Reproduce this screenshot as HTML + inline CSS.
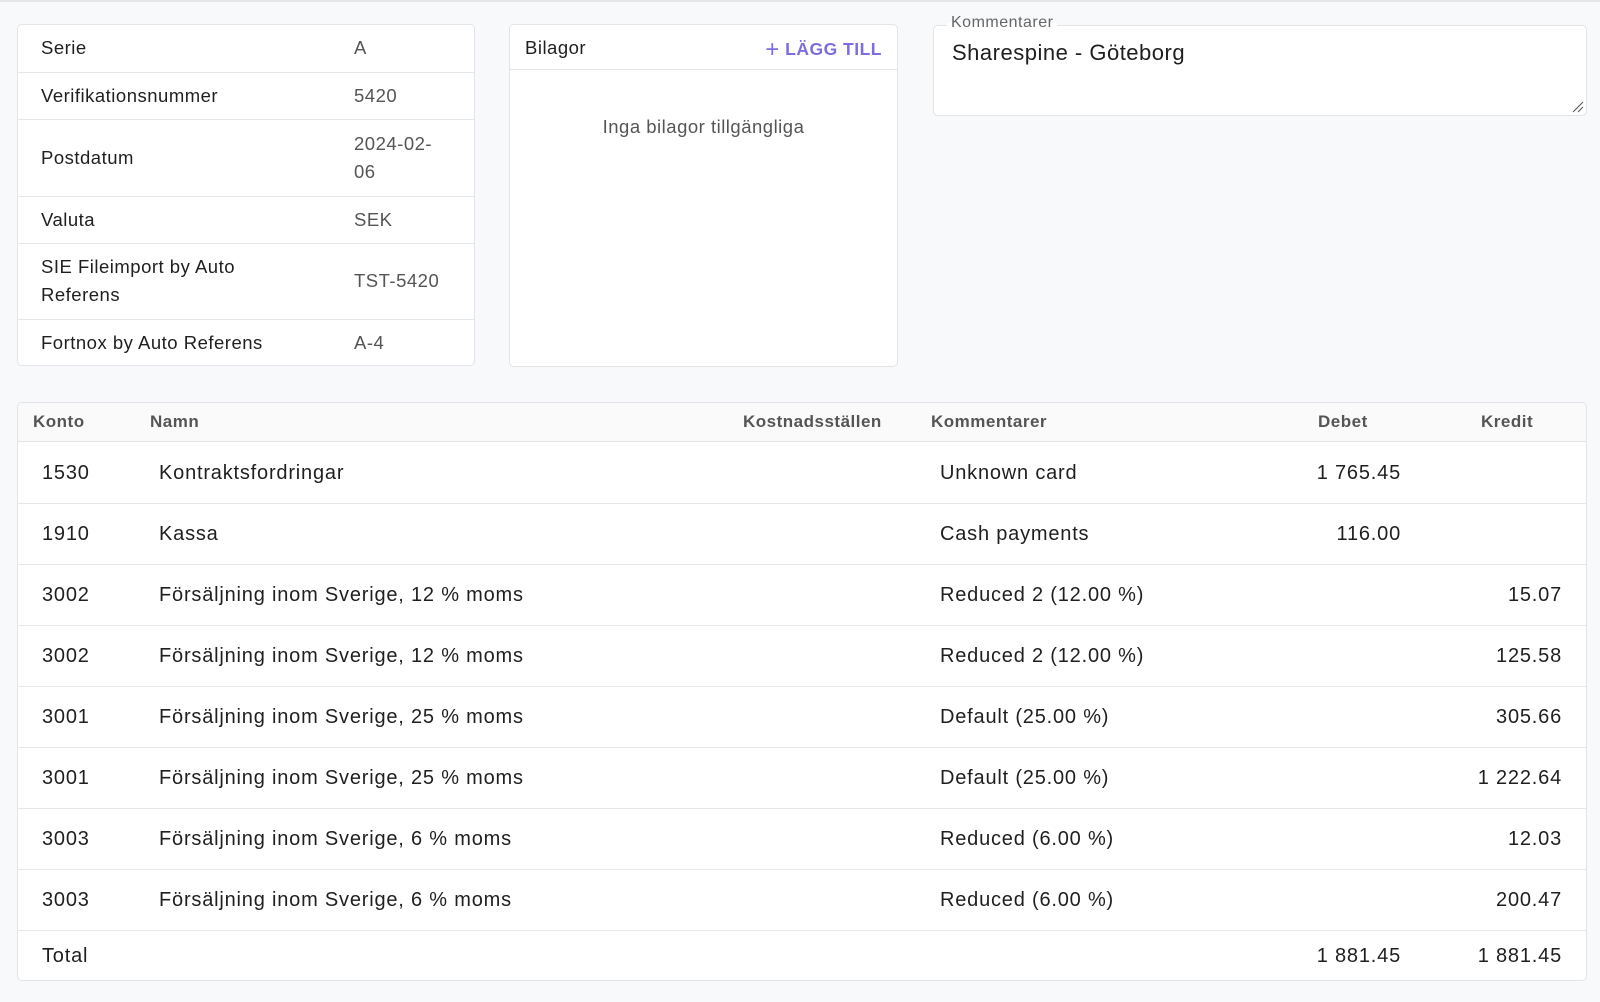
<!DOCTYPE html>
<html><head><meta charset="utf-8"><style>
*{box-sizing:border-box;margin:0;padding:0}
body{width:1600px;height:1002px;background:#f8f9fa;font-family:"Liberation Sans",sans-serif;color:#1f1f1f;position:relative;overflow:hidden;border-top:2px solid #e4e6ea;letter-spacing:0.5px}
.card{position:absolute;background:#fff;border:1px solid #e2e4e8;border-radius:5px}
.info{left:17px;top:22px;width:458px;height:342px}
.info .r{position:absolute;left:0;right:0;border-top:1px solid #e6e7ea;font-size:18.5px}
.info .r:first-child{border-top:none}
.info .k{position:absolute;left:23px;line-height:28px}
.info .v{position:absolute;left:336px;color:#555;line-height:28px}
.bil{left:509px;top:22px;width:389px;height:343px}
.bil .h{height:45px;border-bottom:1px solid #e2e4e8;position:relative}
.fld{left:933px;top:23px;width:654px;height:91px}
.tbl{left:17px;top:400px;width:1570px;height:579px}
.hd{position:absolute;left:0;right:0;top:0;height:39px;background:#fafafa;border-bottom:1px solid #e2e4e8;border-radius:5px 5px 0 0}
.hd span{position:absolute;top:9px;font-size:17px;font-weight:bold;color:#555}
.row{position:absolute;left:0;right:0;height:61px;border-bottom:1px solid #e6e7ea;font-size:20px;letter-spacing:0.8px}
.row span{position:absolute;top:19px}
.rt{text-align:right}
</style></head><body>
<div class="card info">
<div class="r" style="top:0;height:47px"><span class="k" style="top:9px">Serie</span><span class="v" style="top:9px">A</span></div>
<div class="r" style="top:47px;height:47px"><span class="k" style="top:9px">Verifikationsnummer</span><span class="v" style="top:9px">5420</span></div>
<div class="r" style="top:94px;height:77px"><span class="k" style="top:24px">Postdatum</span><span class="v" style="top:10px">2024-02-<br>06</span></div>
<div class="r" style="top:171px;height:47px"><span class="k" style="top:9px">Valuta</span><span class="v" style="top:9px">SEK</span></div>
<div class="r" style="top:218px;height:76px"><span class="k" style="top:9px">SIE Fileimport by Auto<br>Referens</span><span class="v" style="top:23px">TST-5420</span></div>
<div class="r" style="top:294px;height:47px"><span class="k" style="top:9px">Fortnox by Auto Referens</span><span class="v" style="top:9px">A-4</span></div>
</div>
<div class="card bil">
<div class="h"><span style="position:absolute;left:15px;top:12px;font-size:18.5px">Bilagor</span>
<span style="position:absolute;right:15px;top:11px;font-size:17.5px;font-weight:bold;color:#7b6fe0"><span style="font-size:24px;font-weight:normal;vertical-align:-2px">+</span> LÄGG TILL</span></div>
<div style="text-align:center;margin-top:46px;font-size:18.5px;color:#555">Inga bilagor tillgängliga</div>
</div>
<div class="card fld">
<span style="position:absolute;left:13px;top:-12px;padding:0 4px;font-size:16px;color:#666;background:linear-gradient(#f8f9fa 50%,#fff 50%)">Kommentarer</span>
<span style="position:absolute;left:18px;top:14px;font-size:22px">Sharespine - Göteborg</span>
<svg style="position:absolute;right:2px;bottom:2px" width="12" height="12"><path d="M1 11L11 1M6 11L11 6" stroke="#555" stroke-width="1"/></svg>
</div>
<div class="card tbl">
<div class="hd"><span style="left:15px">Konto</span><span style="left:132px">Namn</span><span style="left:725px">Kostnadsställen</span><span style="left:913px">Kommentarer</span><span style="left:1300px">Debet</span><span style="left:1463px">Kredit</span></div>
<div class="row" style="top:40px"><span style="left:24px">1530</span><span style="left:141px">Kontraktsfordringar</span><span style="left:922px">Unknown card</span><span class="rt" style="right:185px">1 765.45</span></div>
<div class="row" style="top:101px"><span style="left:24px">1910</span><span style="left:141px">Kassa</span><span style="left:922px">Cash payments</span><span class="rt" style="right:185px">116.00</span></div>
<div class="row" style="top:162px"><span style="left:24px">3002</span><span style="left:141px">Försäljning inom Sverige, 12 % moms</span><span style="left:922px">Reduced 2 (12.00 %)</span><span class="rt" style="right:24px">15.07</span></div>
<div class="row" style="top:223px"><span style="left:24px">3002</span><span style="left:141px">Försäljning inom Sverige, 12 % moms</span><span style="left:922px">Reduced 2 (12.00 %)</span><span class="rt" style="right:24px">125.58</span></div>
<div class="row" style="top:284px"><span style="left:24px">3001</span><span style="left:141px">Försäljning inom Sverige, 25 % moms</span><span style="left:922px">Default (25.00 %)</span><span class="rt" style="right:24px">305.66</span></div>
<div class="row" style="top:345px"><span style="left:24px">3001</span><span style="left:141px">Försäljning inom Sverige, 25 % moms</span><span style="left:922px">Default (25.00 %)</span><span class="rt" style="right:24px">1 222.64</span></div>
<div class="row" style="top:406px"><span style="left:24px">3003</span><span style="left:141px">Försäljning inom Sverige, 6 % moms</span><span style="left:922px">Reduced (6.00 %)</span><span class="rt" style="right:24px">12.03</span></div>
<div class="row" style="top:467px"><span style="left:24px">3003</span><span style="left:141px">Försäljning inom Sverige, 6 % moms</span><span style="left:922px">Reduced (6.00 %)</span><span class="rt" style="right:24px">200.47</span></div>
<div class="row" style="top:528px;height:50px;border-bottom:none"><span style="left:24px;top:14px">Total</span><span class="rt" style="right:185px;top:14px">1 881.45</span><span class="rt" style="right:24px;top:14px">1 881.45</span></div>
</div>
</body></html>
